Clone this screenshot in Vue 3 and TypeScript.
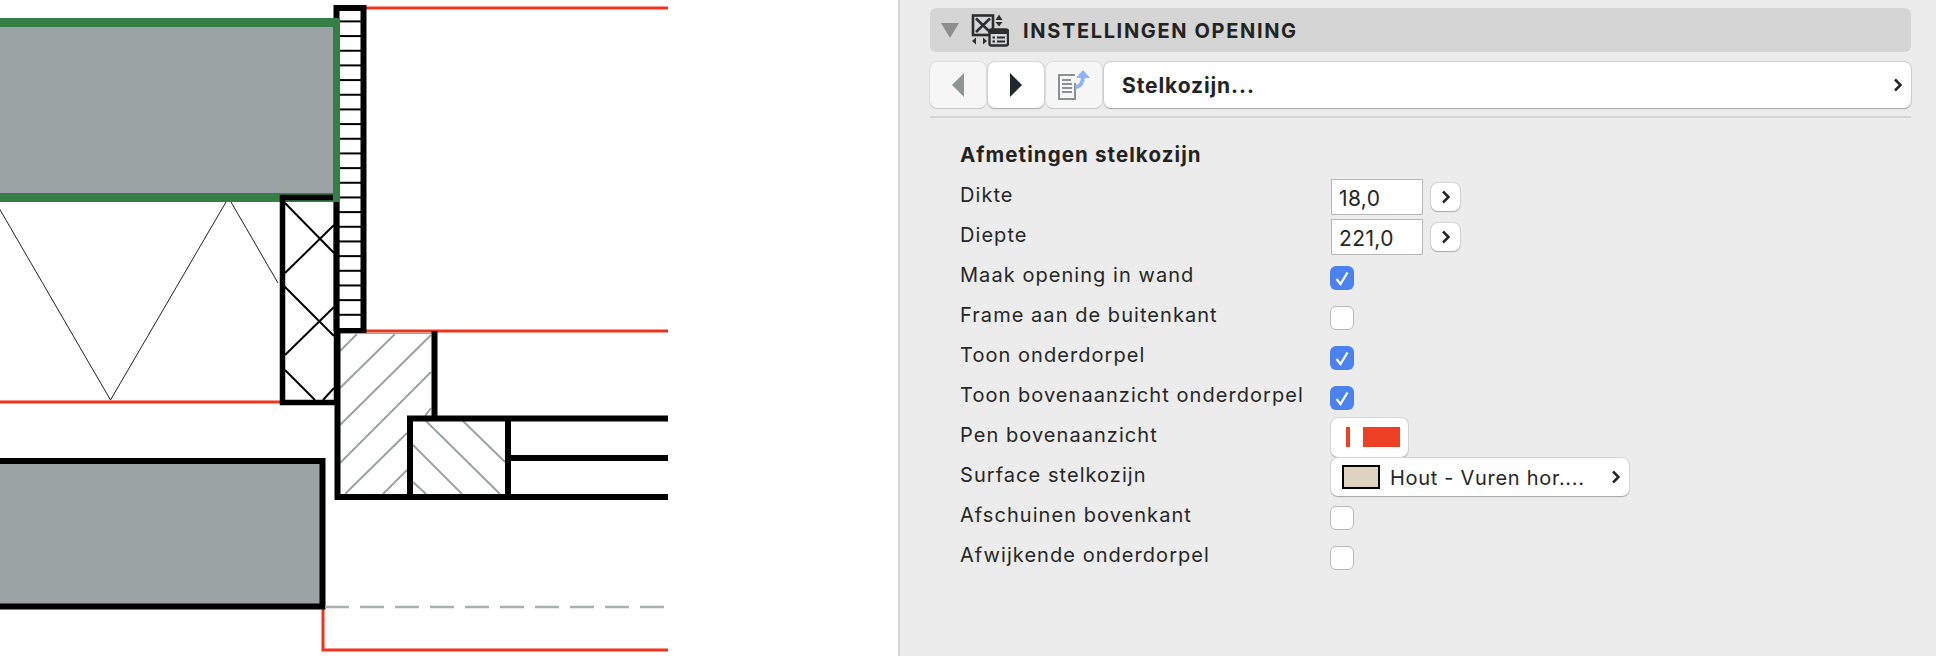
<template>
  <div class="page">
    <div class="drawing">
      <svg class="plan" width="668" height="656" viewBox="0 0 668 656">
        <!-- thin zigzag insulation -->
        <polyline points="-1,208 110.5,400 226,202" class="thin" />
        <line x1="231" y1="202" x2="278" y2="283" class="thin" />

        <!-- red outlines -->
        <rect x="362" y="6.5" width="306" height="3" fill="#f0341c" />
        <rect x="362" y="329.5" width="306" height="3" fill="#f0341c" />
        <rect x="0" y="400.5" width="281" height="3" fill="#f0341c" />
        <polyline points="323,608 323,650 668,650" class="red" />

        <!-- upper wall -->
        <rect x="-5" y="18" width="345" height="184" fill="#357f46" />
        <rect x="0" y="27" width="333" height="166" fill="#9ba3a5" />

        <!-- ladder strip -->
        <line v-for="y in rungs" :key="y" x1="338" :y1="y" x2="362" :y2="y" class="rung" />
        <path d="M336.5 18V8H363.5V331H336.5" class="heavy" />
        <path d="M336.5 202V331" class="heavy" />
        <rect x="333" y="18" width="7" height="184" fill="#357f46" />

        <!-- crossed batten -->
        <line v-for="(l, i) in crossLines" :key="i" :x1="l[0]" :y1="l[1]" :x2="l[2]" :y2="l[3]" class="cross" />
        <rect x="282.5" y="197.5" width="54" height="205" class="heavy-box" />
        <rect x="333" y="193" width="7" height="9" fill="#357f46" />

        <!-- sill hatching -->
        <line v-for="(l, i) in hatchLines" :key="i" :x1="l[0]" :y1="l[1]" :x2="l[2]" :y2="l[3]" class="hatch" />
        <path d="M340 333.5H432" class="hair" />
        <path d="M337.5 331V497H668" class="heavy" />
        <path d="M434.5 331V418" class="heavy" />
        <path d="M410 497V418.5H668" class="heavy" />
        <path d="M508 418.5V497" class="heavy" />
        <path d="M508 458H668" class="heavy" />

        <!-- lower wall -->
        <rect x="0" y="461" width="322.5" height="146" fill="#9ba3a5" />
        <path d="M0 461H322.5V606.5H0" class="heavy" />
        <line x1="325" y1="607" x2="668" y2="607" class="dash" />
      </svg>
    </div>

    <aside class="panel">
      <header class="panel-head">
        <span class="collapse"></span>
        <svg class="head-icon" width="38" height="34" viewBox="0 0 38 34">
          <rect x="2" y="2.5" width="20" height="19.5" fill="none" stroke="#2a2e31" stroke-width="2.6" />
          <path d="M5 5.5L19 19M19 5.5L5 19" fill="none" stroke="#2a2e31" stroke-width="2.6" />
          <path d="M28 1.5L31.5 7H24.5ZM28 13.5L31.5 9H24.5Z" fill="#2a2e31" />
          <path d="M5 24.5L1 28L5 31.5ZM12 24.5L16 28L12 31.5Z" fill="#2a2e31" />
          <rect x="18.5" y="16.5" width="18.5" height="16" rx="2" fill="#d5d5d5" stroke="#2a2e31" stroke-width="2.4" />
          <path d="M18 16.5H37V21H18Z" fill="#2a2e31" />
          <path d="M21.5 24.5H24M26 24.5H34M21.5 28.5H24M26 28.5H34" stroke="#2a2e31" stroke-width="2" />
        </svg>
        <h1 class="panel-title">INSTELLINGEN OPENING</h1>
      </header>

      <div class="toolbar">
        <button class="tool tool-off">
          <svg width="12" height="24" viewBox="0 0 12 24"><path d="M12 0V24L0 12Z" fill="#8e9597" /></svg>
        </button>
        <button class="tool">
          <svg width="12" height="24" viewBox="0 0 12 24"><path d="M0 0V24L12 12Z" fill="#22292e" /></svg>
        </button>
        <button class="tool tool-off">
          <svg width="34" height="32" viewBox="0 0 34 32">
            <path d="M18 6H2V30H18V14" fill="none" stroke="#8b9092" stroke-width="2" />
            <path d="M5 11H14M5 15H15M5 19H15M5 23H15" stroke="#8b9092" stroke-width="2" />
            <path d="M18 18C23 18 26 14 26 7" fill="none" stroke="#8db2f7" stroke-width="4" />
            <path d="M19 9L26 1L33 9Z" fill="#8db2f7" />
          </svg>
        </button>
        <button class="picker">
          <span>Stelkozijn...</span>
          <svg class="chevron" width="10" height="14" viewBox="0 0 10 14"><path d="M2 1.5L7.5 7L2 12.5" /></svg>
        </button>
      </div>

      <div class="divider"></div>

      <section class="settings">
        <h2 class="settings-title">Afmetingen stelkozijn</h2>

        <div v-for="row in rows" :key="row.label" class="row">
          <span class="row-label">{{ row.label }}</span>
          <div class="row-control">
            <template v-if="row.kind === 'number'">
              <div class="num">{{ row.value }}</div>
              <button class="mini">
                <svg class="chevron" width="10" height="14" viewBox="0 0 10 14"><path d="M2 1.5L7.5 7L2 12.5" /></svg>
              </button>
            </template>

            <span v-else-if="row.kind === 'check'" class="check" :class="{ on: row.checked }">
              <svg v-if="row.checked" width="16" height="16" viewBox="0 0 16 16"><path d="M2.5 9L6.5 14L13.5 2.5" /></svg>
            </span>

            <button v-else-if="row.kind === 'pen'" class="pen">
              <span class="pen-line"></span>
              <span class="pen-fill"></span>
            </button>

            <button v-else class="surface">
              <span class="swatch"></span>
              <span class="surface-name">{{ row.value }}</span>
              <svg class="chevron" width="10" height="14" viewBox="0 0 10 14"><path d="M2 1.5L7.5 7L2 12.5" /></svg>
            </button>
          </div>
        </div>
      </section>
    </aside>
  </div>
</template>

<script setup lang="ts">
type Row = {
  label: string
  kind: 'number' | 'check' | 'pen' | 'surface'
  value?: string
  checked?: boolean
}

const rows: Row[] = [
  { label: 'Dikte', kind: 'number', value: '18,0' },
  { label: 'Diepte', kind: 'number', value: '221,0' },
  { label: 'Maak opening in wand', kind: 'check', checked: true },
  { label: 'Frame aan de buitenkant', kind: 'check', checked: false },
  { label: 'Toon onderdorpel', kind: 'check', checked: true },
  { label: 'Toon bovenaanzicht onderdorpel', kind: 'check', checked: true },
  { label: 'Pen bovenaanzicht', kind: 'pen' },
  { label: 'Surface stelkozijn', kind: 'surface', value: 'Hout - Vuren hor....' },
  { label: 'Afschuinen bovenkant', kind: 'check', checked: false },
  { label: 'Afwijkende onderdorpel', kind: 'check', checked: false }
]

// ladder rungs, every 14.67px
const rungs = Array.from({ length: 21 }, (_, i) => 21.4 + i * 14.67)

const crossLines = [
  [285, 203, 334, 253],
  [285, 273, 334, 225],
  [283, 285, 334, 336],
  [285, 355, 334, 307],
  [285, 370, 315, 400],
  [323, 400, 334, 388]
]

const hatchLines = [
  [340, 351, 357, 334],
  [340, 388, 395, 334],
  [340, 425, 431, 335],
  [340, 463, 431, 372],
  [345, 494, 407, 433],
  [383, 494, 407, 470],
  [425, 416, 431, 408],
  [426, 421, 500, 494],
  [463, 421, 505, 462],
  [413, 445, 462, 494],
  [413, 482, 426, 494]
]
</script>

<style scoped>
.page { display: flex; width: 1936px; height: 656px; overflow: hidden; background: #fff; font-family: Inter, "Liberation Sans", sans-serif; color: #262626; }
.drawing { width: 898px; flex: none; }
.plan { display: block; }
.thin { fill: none; stroke: #222; stroke-width: 1; }
.red { fill: none; stroke: #f0341c; stroke-width: 3; }
.heavy { fill: none; stroke: #000; stroke-width: 6; }
.heavy-box { fill: none; stroke: #000; stroke-width: 5.5; }
.rung { stroke: #000; stroke-width: 2; }
.cross { stroke: #000; stroke-width: 2; }
.hatch { stroke: #9aa3a5; stroke-width: 2; }
.hair { stroke: #9aa3a5; stroke-width: 1; }
.dash { stroke: #a9b0b2; stroke-width: 2.5; stroke-dasharray: 24 11; }

.panel { flex: 1; box-sizing: border-box; padding: 8px 25px 0 30px; background: #ececec; border-left: 2px solid #d4d4d4; }
.panel-head { display: flex; align-items: center; height: 44px; background: #d5d5d5; border-radius: 6px; }
.collapse { width: 0; height: 0; margin-left: 11px; border-left: 9px solid transparent; border-right: 9px solid transparent; border-top: 15px solid #8e8e8e; }
.head-icon { margin-left: 12px; }
.panel-title { margin: 2px 0 0 14px; font-size: 20px; font-weight: 700; letter-spacing: 1.65px; color: #232323; }

.toolbar { display: flex; gap: 2px; height: 46px; margin-top: 10px; }
button { padding: 0; border: none; font-family: inherit; color: inherit; }
.tool { display: flex; align-items: center; justify-content: center; width: 56px; background: #fff; border-radius: 7px; box-shadow: 0 1px 1px #a9a9a9, 0 0 0 1px #d6d6d6; }
.tool-off { background: #f6f6f6; box-shadow: 0 1px 1px #c9c9c9, 0 0 0 1px #dedede; }
.picker { flex: 1; display: flex; align-items: center; justify-content: space-between; padding: 0 8px 0 18px; background: #fff; border-radius: 7px; box-shadow: 0 1px 1px #a9a9a9, 0 0 0 1px #d0d0d0; font-size: 21px; font-weight: 700; letter-spacing: 0.9px; color: #232323; }
.chevron { flex: none; }
.chevron path { fill: none; stroke: #22262a; stroke-width: 2.5; }

.divider { height: 2px; margin-top: 8px; background: #d5d5d5; }

.settings { padding: 22px 0 0 30px; }
.settings-title { margin: 0 0 7px; font-size: 20.5px; line-height: 30px; font-weight: 700; letter-spacing: 1.1px; color: #232323; }
.row { display: flex; height: 40px; }
.row-label { width: 371px; font-size: 20px; line-height: 36px; letter-spacing: 1.05px; }
.row-control { display: flex; align-items: center; }

.num { box-sizing: border-box; width: 92px; height: 36px; padding-left: 7px; background: #fff; border: 1.5px solid #b8b8b8; font-size: 21px; line-height: 37px; letter-spacing: 0.4px; }
.mini { display: flex; align-items: center; justify-content: center; width: 29px; height: 28px; margin-left: 8px; background: #fff; border-radius: 7px; box-shadow: 0 1px 1px #a9a9a9, 0 0 0 1px #d6d6d6; }
.check { box-sizing: border-box; display: flex; align-items: center; justify-content: center; width: 24px; height: 24px; margin: 2px 0 0 -1px; background: #fff; border: 1px solid #b9b9b9; border-radius: 6px; }
.check.on { background: #4c82f0; border: none; }
.check svg path { fill: none; stroke: #fff; stroke-width: 2.2; }
.pen { display: flex; align-items: center; width: 77px; height: 39px; padding-left: 15px; background: #fff; border-radius: 7px; box-shadow: 0 1px 1px #a9a9a9, 0 0 0 1px #d6d6d6; }
.pen-line { width: 4px; height: 20px; background: #ee4025; }
.pen-fill { width: 37px; height: 20px; margin-left: 13px; background: #ee4025; }
.surface { display: flex; align-items: center; width: 298px; height: 38px; padding-left: 11px; background: #fff; border-radius: 7px; box-shadow: 0 1px 1px #a9a9a9, 0 0 0 1px #d6d6d6; font-size: 20px; letter-spacing: 0.7px; }
.swatch { box-sizing: border-box; width: 38px; height: 24px; background: #ddd3bf; border: 2px solid #000; }
.surface-name { margin: 2px 0 0 10px; width: 221px; text-align: left; }
</style>

<style>
html, body { margin: 0; padding: 0; }
</style>
